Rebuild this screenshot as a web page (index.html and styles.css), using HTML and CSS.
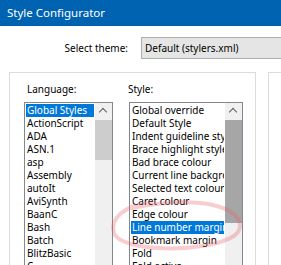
FILE: index.html
```html
<!DOCTYPE html>
<html>
<head>
<title>Style Configurator</title>
<meta charset="utf-8">
<link rel="stylesheet" href="styles.css">
</head>
<body>
<div class="window">
	<div class="titlebar">Style Configurator</div>
	<div class="theme-row">
		<span class="theme-label">Select theme:</span>
		<div class="combo">Default (stylers.xml)</div>
	</div>
	<div class="panels">
		<div class="group main">
			<div class="col lang">
				<div class="label">Language:</div>
				<div class="listbox">
					<ul class="items">
						<li class="selected">Global Styles</li>
						<li>ActionScript</li>
						<li>ADA</li>
						<li>ASN.1</li>
						<li>asp</li>
						<li>Assembly</li>
						<li>autoIt</li>
						<li>AviSynth</li>
						<li>BaanC</li>
						<li>Bash</li>
						<li>Batch</li>
						<li>BlitzBasic</li>
						<li>C</li>
					</ul>
					<div class="scrollbar">
						<div class="arrow"><i></i></div>
						<div class="thumb"></div>
					</div>
				</div>
			</div>
			<div class="col style">
				<div class="label">Style:</div>
				<div class="listbox">
					<ul class="items">
						<li>Global override</li>
						<li>Default Style</li>
						<li>Indent guideline style</li>
						<li>Brace highlight style</li>
						<li>Bad brace colour</li>
						<li>Current line background colour</li>
						<li>Selected text colour</li>
						<li>Caret colour</li>
						<li>Edge colour</li>
						<li class="selected">Line number margin</li>
						<li>Bookmark margin</li>
						<li>Fold</li>
						<li>Fold active</li>
					</ul>
					<div class="scrollbar">
						<div class="arrow"><i></i></div>
						<div class="thumb"></div>
					</div>
				</div>
			</div>
		</div>
		<div class="group side"></div>
	</div>
	<svg class="annot" width="281" height="265" viewBox="0 0 281 265">
		<path d="M152 203 C 122 205, 110 220, 114 233 C 120 252, 205 254, 234 236 C 248 225, 238 207, 200 203 C 180 201, 160 202, 132 208" fill="none" stroke="rgba(232,100,110,0.32)" stroke-width="4" stroke-linecap="round"/>
	</svg>
</div>
</body>
</html>
```

FILE: styles.css
```css
body, ul, li, div { margin: 0; padding: 0; }
li { list-style: none; }
body { background: #fff; font-family: "Noto Sans", "Liberation Sans", sans-serif; font-size: 10px; color: #000; }
.window { width: 281px; height: 265px; position: relative; overflow: hidden; background: #fff; }
.titlebar { height: 26px; line-height: 26px; padding-left: 7px; background: #0063b1; color: #fff; font-size: 11.5px; }
.theme-row { display: flex; align-items: center; padding-top: 11px; height: 22px; }
.theme-label { width: 128px; text-align: right; flex: none; }
.combo { margin-left: 13px; flex: none; width: 200px; height: 20px; line-height: 20px; border: 1px solid #adadad; background: #e5e5e5; padding-left: 3px; box-sizing: content-box; }
.panels { display: flex; gap: 12px; margin-top: 13px; padding-left: 9px; }
.group { border: 1px solid #dcdcdc; height: 260px; flex: none; }
.main { width: 247px; display: flex; padding: 10px 0 0 14px; box-sizing: border-box; }
.side { width: 40px; }
.label { height: 13px; line-height: 13px; margin-bottom: 6px; }
.lang .label { padding-left: 3px; }
.style { margin-left: 16px; }
.style .label { margin-left: -1px; }
.listbox { display: flex; border: 1px solid #828790; height: 200px; }
.lang .listbox { width: 87px; }
.style .listbox { width: 112px; }
.items { flex: 1; padding: 1px; overflow: hidden; min-width: 0; }
.items li { height: 13px; line-height: 13px; padding-left: 1px; white-space: nowrap; overflow: hidden; }
.items .selected { background: #0078d7; color: #fff; }
.scrollbar { width: 17px; flex: none; background: #f0f0f0; }
.arrow { height: 17px; position: relative; }
.arrow i { position: absolute; left: 5px; top: 6px; width: 5px; height: 5px; border-left: 1.5px solid #606060; border-top: 1.5px solid #606060; transform: rotate(45deg); }
.lang .thumb { height: 40px; background: #cdcdcd; }
.style .thumb { height: 103px; background: #a6a6a6; }
.annot { position: absolute; left: 0; top: 0; pointer-events: none; }
```
